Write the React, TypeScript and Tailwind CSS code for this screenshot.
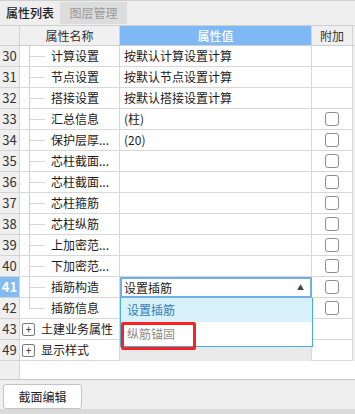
import React from "react";

type Row = { n: number; name: string; value?: string; check?: boolean };

const rows: Row[] = [
  { n: 30, name: "计算设置", value: "按默认计算设置计算" },
  { n: 31, name: "节点设置", value: "按默认节点设置计算" },
  { n: 32, name: "搭接设置", value: "按默认搭接设置计算" },
  { n: 33, name: "汇总信息", value: "(柱)", check: true },
  { n: 34, name: "保护层厚...", value: "(20)", check: true },
  { n: 35, name: "芯柱截面...", check: true },
  { n: 36, name: "芯柱截面...", check: true },
  { n: 37, name: "芯柱箍筋", check: true },
  { n: 38, name: "芯柱纵筋", check: true },
  { n: 39, name: "上加密范...", check: true },
  { n: 40, name: "下加密范...", check: true },
  { n: 41, name: "插筋构造", value: "设置插筋", check: true },
  { n: 42, name: "插筋信息", check: true },
];

const font = { fontFamily: '"Noto Sans CJK SC", "Noto Sans", sans-serif' };

function Checkbox() {
  return <div className="w-[14px] h-[14px] rounded-[3px] border border-[#8e8e8e] bg-white" />;
}

function Plus() {
  return (
    <div className="w-[13px] h-[13px] border border-[#7a7a7a] rounded-[2px] flex items-center justify-center text-[11px] leading-none text-[#333] bg-white">
      +
    </div>
  );
}

export default function App() {
  return (
    <div className="w-[355px] h-[414px] bg-[#efefef] flex flex-col text-[12px] text-[#1a1a1a] overflow-hidden" style={font}>
      {/* tabs */}
      <div className="h-[25px] flex items-stretch border-t border-[#cfcfcf] bg-[#eeeeee]">
        <div className="w-[60px] flex items-center justify-center font-medium text-[#222]">属性列表</div>
        <div className="w-[67px] mt-[1px] mb-[1px] bg-[#dcdcdc] flex items-center justify-center text-[#9a9a9a]">图层管理</div>
      </div>

      {/* grid */}
      <div className="relative flex flex-col">
        <div className="h-[21px] flex border-t border-b border-[#d0d0d0]">
          <div className="w-[20px] bg-[#efefef] border-r border-[#d4d4d4]" />
          <div className="w-[100px] bg-[#f0f0f0] border-r border-[#d4d4d4] flex items-center justify-center text-[#333]">属性名称</div>
          <div className="w-[192px] bg-[#7fb9f5] border-r border-[#d4d4d4] flex items-center justify-center text-white font-medium">属性值</div>
          <div className="w-[41px] bg-[#f0f0f0] border-r border-[#d4d4d4] flex items-center justify-center text-[#333]">附加</div>
          <div className="flex-1 bg-[#efefef]" />
        </div>

        {rows.map((r, i) => {
          const active = r.n === 41;
          const last = i === rows.length - 1;
          return (
            <div key={r.n} className="h-[21px] flex">
              <div
                className={
                  active
                    ? "w-[20px] bg-[#82bbf5] text-white font-bold border-r border-b border-[#d4d4d4] flex items-center justify-center text-[13px]"
                    : "w-[20px] bg-[#efefef] text-[#333] border-r border-b border-[#d4d4d4] flex items-center justify-center text-[13px]"
                }
              >
                {r.n}
              </div>
              <div className="w-[100px] bg-white border-r border-b border-[#d8d8d8] flex items-center relative">
                <div className={last ? "absolute left-[9px] top-0 h-[10px] w-px bg-[#cfcfcf]" : "absolute left-[9px] top-0 bottom-0 w-px bg-[#cfcfcf]"} />
                <div className="absolute left-[9px] top-[10px] w-[16px] h-px bg-[#d6d6d6]" />
                <span className="pl-[31px] whitespace-nowrap">{r.name}</span>
              </div>
              {active ? (
                <div className="w-[192px] bg-white border-2 border-[#72aee8] flex items-center justify-between pl-[2px] pr-[6px]">
                  <span>{r.value}</span>
                  <span className="text-[7px] text-[#444] leading-none">▲</span>
                </div>
              ) : (
                <div className="w-[192px] bg-white border-r border-b border-[#d8d8d8] flex items-center pl-[4px] whitespace-nowrap">
                  {r.value}
                </div>
              )}
              <div className="w-[41px] bg-white border-r border-b border-[#d8d8d8] flex items-center justify-center">
                {r.check && <Checkbox />}
              </div>
              <div className="flex-1 bg-[#efefef]" />
            </div>
          );
        })}

        {[
          { n: 43, name: "土建业务属性" },
          { n: 49, name: "显示样式" },
        ].map((g) => (
          <div key={g.n} className="h-[21px] flex">
            <div className="w-[20px] bg-[#efefef] text-[#333] border-r border-b border-[#d4d4d4] flex items-center justify-center text-[13px]">
              {g.n}
            </div>
            <div className="w-[100px] bg-white border-r border-b border-[#d8d8d8] flex items-center gap-[6px] pl-[2px]">
              <Plus />
              <span className="whitespace-nowrap">{g.name}</span>
            </div>
            <div className="w-[192px] bg-[#e9e9e9] border-r border-[#d8d8d8]" />
            <div className="w-[41px] bg-white border-r border-b border-[#d8d8d8]" />
            <div className="flex-1 bg-[#efefef]" />
          </div>
        ))}

        {/* empty grid area */}
        <div className="h-[18px] flex">
          <div className="w-[20px] bg-[#efefef] border-r border-[#d4d4d4]" />
          <div className="flex-1 bg-white" />
        </div>

        {/* dropdown list */}
        <div className="absolute left-[120px] top-[273px] w-[193px] h-[49px] bg-white border border-t-0 border-[#46aedb] flex flex-col">
          <div className="h-[24px] bg-[#d9f1fa] flex items-center pl-[6px] text-[#2f7bb8]">设置插筋</div>
          <div className="h-[24px] flex items-center pl-[6px] text-[#8a8a8a]">纵筋锚固</div>
        </div>
        <div className="absolute left-[121px] top-[297px] w-[75px] h-[28px] border-[3px] border-[#ff2121] rounded-[2px]" />
      </div>

      {/* bottom panel */}
      <div className="flex-1 border-t border-[#c8c8c8] bg-[#efefef] flex flex-col">
        <div className="flex-1 px-[3px] pt-[4px]">
          <button className="w-[79px] h-[25px] bg-white border border-[#c4c4c4] rounded-[3px] text-[12px] text-[#222]">
            截面编辑
          </button>
        </div>
        <div className="h-[5px] bg-[#dadada]" />
      </div>
    </div>
  );
}
